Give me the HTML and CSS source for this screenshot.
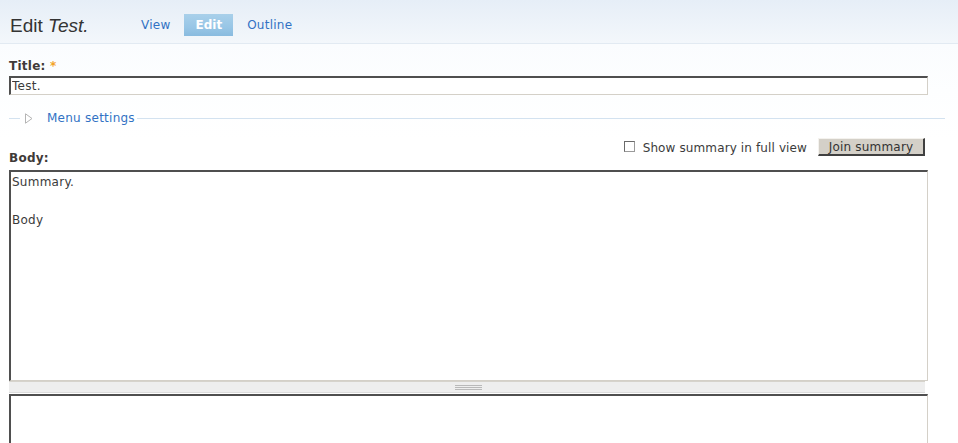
FILE: index.html
```html
<!DOCTYPE html>
<html lang="en">
<head>
<meta charset="utf-8">
<title>Edit Test.</title>
<link rel="stylesheet" href="styles.css">
</head>
<body>
<header class="page-head">
  <h1 class="page-title">Edit <em>Test.</em></h1>
  <ul class="tabs">
    <li><a href="#">View</a></li>
    <li class="active"><a href="#">Edit</a></li>
    <li><a href="#">Outline</a></li>
  </ul>
</header>

<main class="content">
  <div class="form-item">
    <label class="form-label" for="edit-title">Title: <span class="required">*</span></label>
    <input class="form-text" id="edit-title" type="text" value="Test.">
  </div>

  <div class="fieldset-legend">
    <span class="rule rule-short"></span>
    <svg class="toggle" width="8" height="11" viewBox="0 0 8 11" aria-hidden="true">
      <path d="M0.5 0.8 L7 5.5 L0.5 10.2 Z" fill="#fff" stroke="#b4b4b4" stroke-width="1"/>
    </svg>
    <a class="legend-link" href="#">Menu settings</a>
    <span class="rule rule-long"></span>
  </div>

  <div class="form-item body-field">
    <div class="body-head">
      <label class="form-label" for="edit-body">Body:</label>
      <div class="summary-tools">
        <label class="check"><span class="check-box"></span>Show summary in full view</label>
        <button class="form-button" type="button">Join summary</button>
      </div>
    </div>
    <textarea class="form-textarea" id="edit-body">Summary.

Body</textarea>
    <div class="grippie"><span class="grip"></span></div>
    <textarea class="form-textarea form-textarea-next"></textarea>
  </div>
</main>
</body>
</html>
```

FILE: styles.css
```css
html, body {
  margin: 0;
  padding: 0;
}

body {
  font-family: "DejaVu Sans", Verdana, sans-serif;
  font-size: 12px;
  letter-spacing: 0.25px;
  color: #3b3b3b;
  background: #fff linear-gradient(to bottom, #f7fafd 0, #fdfeff 90px, #fff 140px) no-repeat;
  overflow: hidden;
}

/* Page header with title and local tasks */
.page-head {
  display: flex;
  align-items: flex-start;
  height: 29px;
  padding-top: 14px;
  border-bottom: 1px solid #e2eaf2;
  background: linear-gradient(to bottom, #e6eef7 0, #f3f7fb 100%);
}

.page-title {
  margin: 0 0 0 10px;
  width: 121px;
  font-family: "Liberation Sans", Arial, sans-serif;
  font-size: 19px;
  font-weight: normal;
  letter-spacing: 0;
  line-height: 23px;
  color: #333;
}

.page-title em {
  font-style: italic;
}

.tabs {
  display: flex;
  gap: 4px;
  margin: 0;
  padding: 0;
  list-style: none;
}

.tabs a {
  display: block;
  height: 22px;
  padding: 0 10px;
  line-height: 22px;
  color: #3172c4;
  text-decoration: none;
}

.tabs .active a {
  color: #fff;
  font-weight: bold;
  letter-spacing: 0;
  padding: 0 11px;
  background: linear-gradient(to bottom, #a9d0ea 0, #98c6e6 60%, #89bbdf 100%);
}

/* Form body */
.content {
  padding: 15px 30px 0 9px;
}

.form-label {
  display: block;
  font-weight: bold;
  line-height: 15px;
  color: #403a38;
}

.required {
  color: #f3a328;
}

.form-item > .form-label {
  margin-bottom: 2px;
}

.form-text,
.form-textarea {
  display: block;
  box-sizing: border-box;
  width: 100%;
  margin: 0;
  font-family: "DejaVu Sans", Verdana, sans-serif;
  font-size: 12px;
  letter-spacing: 0.25px;
  color: #3b3b3b;
  background: #fff;
  border-style: solid;
  border-width: 2px 1px 1px 2px;
  border-color: #4f4f4f #d4d0c8 #d4d0c8 #4f4f4f;
  outline: none;
}

.form-text {
  height: 19px;
  padding: 0 1px;
  line-height: 16px;
}

/* Collapsed fieldset legend */
.fieldset-legend {
  display: flex;
  align-items: center;
  height: 20px;
  margin-top: 13px;
  margin-right: -17px;
}

.rule {
  height: 1px;
  background: #d3e2f0;
}

.rule-short {
  width: 11px;
}

.toggle {
  margin: 0 14px 0 5px;
}

.legend-link {
  line-height: 20px;
  color: #3172c4;
  text-decoration: none;
  padding-right: 2px;
}

.rule-long {
  flex: 1;
}

/* Body field with summary controls */
.body-head {
  display: flex;
  justify-content: space-between;
  align-items: flex-start;
  height: 32px;
  margin-top: 10px;
}

.body-head .form-label {
  align-self: flex-end;
  margin-bottom: 4px;
}

.summary-tools {
  display: flex;
  align-items: center;
  height: 18px;
  margin-right: 3px;
}

.check {
  display: flex;
  align-items: center;
  line-height: 18px;
  letter-spacing: 0.12px;
  margin-right: 11px;
  padding-top: 2px;
  color: #3b3b3b;
}

.check-box {
  box-sizing: border-box;
  width: 11px;
  height: 11px;
  margin-right: 8px;
  margin-top: -3px;
  border: 1px solid #6a6a6a;
  border-right-color: #9a9a9a;
  border-bottom-color: #9a9a9a;
  background: #fff;
}

.form-button {
  box-sizing: border-box;
  height: 18px;
  width: 107px;
  padding: 0;
  font-family: "DejaVu Sans", Verdana, sans-serif;
  font-size: 12px;
  letter-spacing: 0.2px;
  line-height: 14px;
  color: #333;
  background: #d4d0c8;
  border-style: solid;
  border-width: 1px 2px 2px 1px;
  border-color: #f4f2ee #404040 #404040 #f4f2ee;
}

.form-textarea {
  height: 211px;
  padding: 1px 1px;
  line-height: 19.2px;
  resize: none;
}

.grippie {
  display: flex;
  justify-content: center;
  align-items: center;
  box-sizing: border-box;
  height: 12px;
  margin-right: 3px;
  background: #eee;
  border-top: 1px solid #d6d3cc;
  border-bottom: 1px solid #dcdcdc;
}

.grip {
  width: 27px;
  height: 5px;
  margin-left: 3px;
  background: repeating-linear-gradient(to bottom, #b9b9b9 0, #b9b9b9 1px, transparent 1px, transparent 2px);
}

.form-textarea-next {
  margin-top: 1px;
  height: 120px;
}
```
